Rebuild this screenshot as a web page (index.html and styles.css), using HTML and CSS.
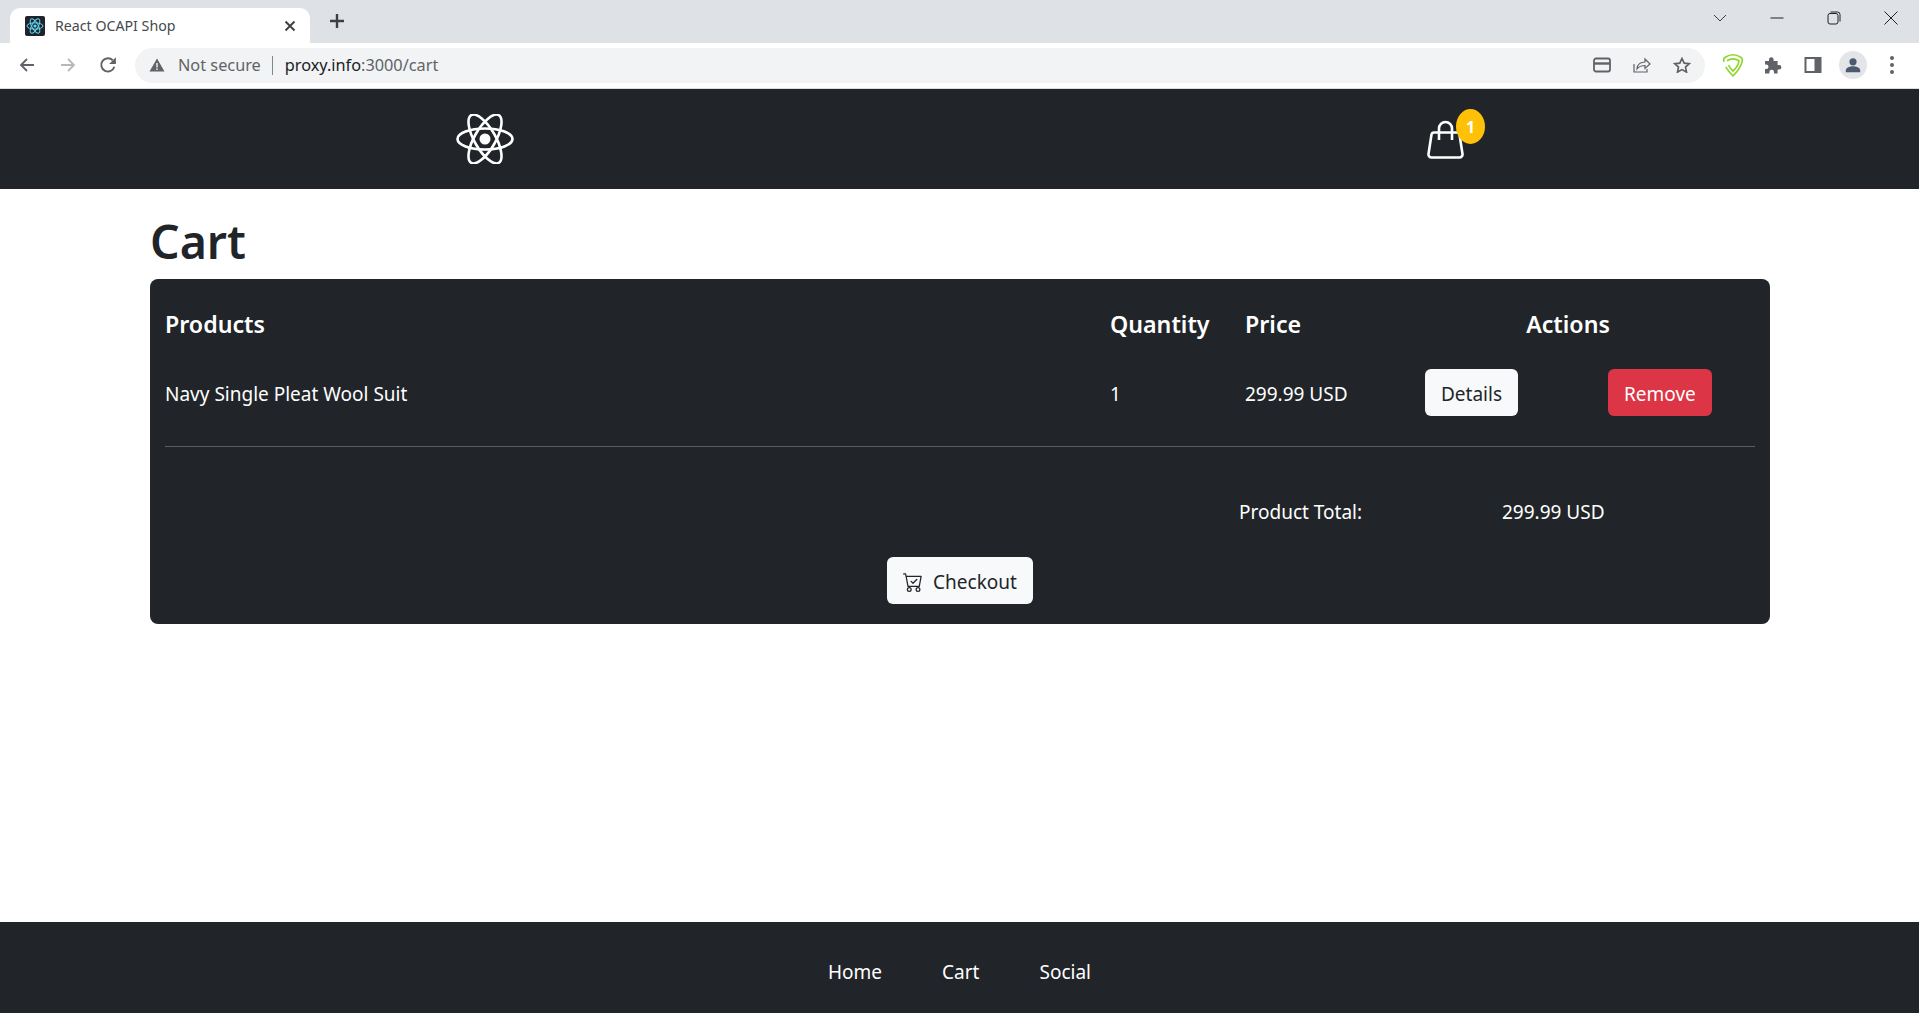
FILE: index.html
```html
<!DOCTYPE html>
<html lang="en">
<head>
    <meta charset="UTF-8">
    <meta name="viewport" content="width=device-width, initial-scale=1.0">
    <title>React OCAPI Shop</title>
    <link rel="stylesheet" href="styles.css">
</head>
<body>
    <!-- browser chrome -->
    <div class="tabstrip">
        <div class="tab">
            <svg class="favicon" viewBox="0 0 20 20">
                <rect width="20" height="20" rx="2" fill="#20232a"/>
                <g fill="none" stroke="#61dafb" stroke-width="1">
                    <ellipse cx="10" cy="10" rx="8" ry="3.2"/>
                    <ellipse cx="10" cy="10" rx="8" ry="3.2" transform="rotate(60 10 10)"/>
                    <ellipse cx="10" cy="10" rx="8" ry="3.2" transform="rotate(120 10 10)"/>
                </g>
                <circle cx="10" cy="10" r="1.6" fill="#61dafb"/>
            </svg>
            <span class="tab-title">React OCAPI Shop</span>
            <svg class="tab-close" viewBox="0 0 12 12"><path d="M1.5 1.5l9 9M10.5 1.5l-9 9" stroke="#3c4043" stroke-width="1.9"/></svg>
        </div>
        <svg class="new-tab" viewBox="0 0 16 16"><path d="M8 1v14M1 8h14" stroke="#3c4043" stroke-width="2.4"/></svg>
        <div class="window-controls">
            <svg class="win-icon" viewBox="0 0 14 14"><path d="M1 4l6 6 6-6" fill="none" stroke="#3c4043"/></svg>
            <svg class="win-icon" viewBox="0 0 14 14"><path d="M0.5 7h13" stroke="#202124"/></svg>
            <svg class="win-icon" viewBox="0 0 14 14"><rect x="1" y="2.5" width="10" height="10.5" rx="2" fill="none" stroke="#202124"/><path d="M3.5 1h7a2.5 2.5 0 0 1 2.5 2.5v7" fill="none" stroke="#202124"/></svg>
            <svg class="win-icon" viewBox="0 0 14 14"><path d="M0.5 0.5l13 13M13.5 0.5l-13 13" stroke="#202124"/></svg>
        </div>
    </div>
    <div class="toolbar">
        <svg class="tool-icon back" viewBox="0 0 16 16"><path d="M15 8H2M8 2L2 8l6 6" fill="none" stroke="#5f6368" stroke-width="1.8"/></svg>
        <svg class="tool-icon forward" viewBox="0 0 16 16"><path d="M1 8h13M8 2l6 6-6 6" fill="none" stroke="#b6b8bb" stroke-width="1.8"/></svg>
        <svg class="tool-icon reload" viewBox="0 0 16 16"><path d="M13.6 9.5A5.9 5.9 0 1 1 12.2 3.8" fill="none" stroke="#5f6368" stroke-width="1.7"/><path d="M15 1v6H9z" fill="#5f6368"/></svg>
        <div class="omnibox">
            <svg class="warn-icon" viewBox="0 0 16 16"><path d="M8 1.5L15.5 14.5H.5z" fill="#5f6368"/><path d="M8 6v4.5M8 11.5V13" stroke="#f1f3f4" stroke-width="1.4"/></svg>
            <span class="not-secure">Not secure</span>
            <span class="url-sep"></span>
            <span class="url"><span class="url-host">proxy.info</span>:3000/cart</span>
            <div class="omni-actions">
                <svg class="omni-icon" viewBox="0 0 18 16"><rect x="1" y="1.5" width="16" height="13" rx="2" fill="none" stroke="#5f6368" stroke-width="1.8"/><path d="M1 6.5h16" stroke="#5f6368" stroke-width="2.4"/></svg>
                <svg class="omni-icon" viewBox="0 0 18 16"><path d="M1 7v8h13v-3" fill="none" stroke="#5f6368" stroke-width="1.2"/><path d="M4 12c0-5 4-7 8-7V2l5 5-5 4.5V8.5c-3 0-6 1-8 3.5z" fill="none" stroke="#5f6368" stroke-width="1.2"/></svg>
                <svg class="omni-icon" viewBox="0 0 18 16"><path d="M9 1.500l2.200 4.600 5 .6-3.700 3.400 1 5L9 12.600 4.500 15.100l1-5L1.800 6.700l5-.6z" fill="none" stroke="#5f6368" stroke-width="1.7"/></svg>
            </div>
        </div>
        <div class="ext-icons">
            <svg class="ext-icon shield-icon" viewBox="0 0 20 20"><path d="M2.500 7.500C1.800 5.500 2 4.500 3.500 3.500 7.500 1 12.500 1 16.500 3.500 18 4.500 18.200 5.500 17.500 7.500 16.300 11.500 13.800 15.500 10 19 7.500 16.800 5.500 14.200 4 11.500" fill="none" stroke="#8fd62f" stroke-width="1.4"/><path d="M5 6.500C8 4.500 12 4.500 15 6.500 14.500 9.500 12.800 12.500 10 15 8.300 13.500 7 11.500 6.300 10" fill="none" stroke="#8fd62f" stroke-width="1.4"/></svg>
            <svg class="ext-icon" viewBox="0 0 20 20"><path d="M2 6h4V4.500a2.300 2.300 0 0 1 4.600 0V6h4v4h1.500a2.300 2.300 0 0 1 0 4.600H14.600V18.500H11v-1.500a2.300 2.300 0 0 0-4.600 0v1.500H2V14h1.200a2.300 2.300 0 0 0 0-4.600H2z" fill="#5f6368"/></svg>
            <svg class="ext-icon panel-icon" viewBox="0 0 20 20"><path d="M1.500 2h17v16h-17zM3.500 4v12h8V4z" fill="#5f6368" fill-rule="evenodd"/></svg>
            <div class="avatar">
                <svg viewBox="0 0 20 20"><circle cx="10" cy="6.500" r="4" fill="#4c5a70"/><path d="M2 18v-2c0-3 5-4.500 8-4.500s8 1.500 8 4.500v2z" fill="#4c5a70"/></svg>
            </div>
            <div class="dots"><span></span><span></span><span></span></div>
        </div>
    </div>

    <!-- page -->
    <nav class="navbar">
        <svg class="logo" viewBox="0 0 58 50">
            <g fill="none" stroke="#fff" stroke-width="2.6">
                <ellipse cx="29" cy="25" rx="27.5" ry="10.5"/>
                <ellipse cx="29" cy="25" rx="27.5" ry="10.5" transform="rotate(60 29 25)"/>
                <ellipse cx="29" cy="25" rx="27.5" ry="10.5" transform="rotate(120 29 25)"/>
            </g>
            <circle cx="29" cy="25" r="5.5" fill="#fff"/>
        </svg>
        <div class="bag">
            <svg class="bag-icon" viewBox="0 0 37 39">
                <path d="M7 12.500h23a2.500 2.500 0 0 1 2.500 2l3 19.500a3 3 0 0 1-3 3.500h-28a3 3 0 0 1-3-3.500l3-19.500a2.500 2.500 0 0 1 2.500-2z" fill="none" stroke="#fff" stroke-width="2.6"/>
                <path d="M12 20V8.500a6.500 6.500 0 0 1 13 0V20" fill="none" stroke="#fff" stroke-width="2.6"/>
            </svg>
            <span class="badge">1</span>
        </div>
    </nav>

    <main class="content">
        <h1>Cart</h1>
        <div class="cart-card">
            <div class="cart-grid cart-head">
                <div>Products</div>
                <div>Quantity</div>
                <div>Price</div>
                <div class="actions-title">Actions</div>
            </div>
            <div class="cart-grid cart-row">
                <div class="cell-text">Navy Single Pleat Wool Suit</div>
                <div class="cell-text">1</div>
                <div class="cell-text">299.99 USD</div>
                <div class="row-actions">
                    <button class="btn btn-light" type="button">Details</button>
                    <button class="btn btn-danger" type="button">Remove</button>
                </div>
            </div>
            <hr class="divider">
            <div class="total-row">
                <span class="total-label">Product Total:</span>
                <span>299.99 USD</span>
            </div>
            <div class="checkout-row">
                <button class="btn btn-light btn-checkout" type="button">
                    <svg class="cart-icon" viewBox="0 0 16 16" fill="#212529">
                        <path d="M11.354 6.354a.5.5 0 0 0-.708-.708L8 8.293 6.854 7.146a.5.5 0 1 0-.708.708l1.5 1.5a.5.5 0 0 0 .708 0l3-3z"/>
                        <path d="M.5 1a.5.5 0 0 0 0 1h1.11l.401 1.607 1.498 7.985A.5.5 0 0 0 4 12h1a2 2 0 1 0 0 4 2 2 0 0 0 0-4h7a2 2 0 1 0 0 4 2 2 0 0 0 0-4h1a.5.5 0 0 0 .491-.408l1.5-8A.5.5 0 0 0 14.5 3H2.89l-.405-1.621A.5.5 0 0 0 2 1H.5zm3.915 10L3.102 4h10.796l-1.313 7h-8.17zM6 14a1 1 0 1 1-2 0 1 1 0 0 1 2 0zm7 0a1 1 0 1 1-2 0 1 1 0 0 1 2 0z"/>
                    </svg>
                    Checkout
                </button>
            </div>
        </div>
    </main>

    <footer class="footer">
        <a href="#">Home</a>
        <a href="#">Cart</a>
        <a href="#">Social</a>
    </footer>
</body>
</html>
```

FILE: styles.css
```css
* {
    box-sizing: border-box;
}
body {
    margin: 0;
    height: 1013px;
    overflow: hidden;
    display: flex;
    flex-direction: column;
    font-family: "Noto Sans", "Open Sans", sans-serif;
    font-size: 19px;
    color: #212529;
    background-color: #fff;
}

/* browser chrome */
.tabstrip {
    height: 43px;
    flex: none;
    display: flex;
    align-items: flex-end;
    background-color: #dee1e6;
}
.tab {
    width: 300px;
    height: 35px;
    margin-left: 10px;
    padding: 0 14px 0 15px;
    display: flex;
    align-items: center;
    background-color: #fff;
    border-radius: 10px 10px 0 0;
}
.favicon {
    width: 20px;
    height: 20px;
    margin-right: 10px;
}
.tab-title {
    flex: 1;
    font-size: 14.2px;
    color: #45494d;
}
.tab-close {
    width: 12px;
    height: 12px;
}
.new-tab {
    width: 16px;
    height: 16px;
    margin: 0 0 14px 19px;
}
.window-controls {
    margin-left: auto;
    height: 100%;
    padding: 11px 21px 0 0;
    display: flex;
    align-items: flex-start;
    gap: 43px;
}
.win-icon {
    width: 14px;
    height: 14px;
}
.toolbar {
    height: 46px;
    flex: none;
    padding: 0 0 1px 19px;
    display: flex;
    align-items: center;
    background-color: #fff;
    border-bottom: 1px solid #dadce0;
}
.tool-icon {
    width: 16px;
    height: 16px;
}
.forward {
    margin-left: 25px;
}
.reload {
    width: 18px;
    height: 18px;
    margin-left: 23px;
}
.omnibox {
    width: 1570px;
    height: 35px;
    margin-left: 18px;
    padding: 0 14px 0 14px;
    display: flex;
    align-items: center;
    background-color: #f1f3f4;
    border-radius: 18px;
    font-size: 16.3px;
}
.warn-icon {
    width: 16px;
    height: 16px;
    margin-right: 13px;
}
.not-secure {
    color: #5f6368;
}
.url-sep {
    width: 1px;
    height: 19px;
    margin: 0 12px 0 11px;
    background-color: #80868b;
}
.url {
    color: #5f6368;
}
.url-host {
    color: #202124;
}
.omni-actions {
    margin-left: auto;
    display: flex;
    gap: 22px;
}
.omni-icon {
    width: 18px;
    height: 16px;
}
.ext-icons {
    margin-left: 16px;
    display: flex;
    align-items: center;
}
.ext-icon {
    width: 20px;
    height: 20px;
    margin-right: 20px;
}
.shield-icon {
    width: 24px;
    height: 24px;
    margin-right: 18px;
}
.panel-icon {
    margin-right: 16px;
}
.avatar {
    width: 28px;
    height: 28px;
    padding: 5px;
    background-color: #e3e5e9;
    border-radius: 50%;
}
.avatar svg {
    display: block;
}
.dots {
    margin-left: 23px;
    display: flex;
    flex-direction: column;
    gap: 3px;
}
.dots span {
    width: 4px;
    height: 4px;
    background-color: #5f6368;
    border-radius: 50%;
}

/* navbar */
.navbar {
    height: 100px;
    flex: none;
    padding: 0 434px 0 456px;
    display: flex;
    align-items: center;
    justify-content: space-between;
    background-color: #212529;
}
.logo {
    width: 58px;
    height: 50px;
}
.bag {
    position: relative;
    width: 58px;
    height: 50px;
    margin-bottom: 10px;
    padding-top: 11px;
}
.bag-icon {
    display: block;
    width: 37px;
    height: 39px;
}
.badge {
    position: absolute;
    top: 0;
    left: 29px;
    width: 29px;
    height: 35px;
    display: flex;
    align-items: center;
    justify-content: center;
    background-color: #ffc107;
    border-radius: 50%;
    color: #fff;
    font-size: 16px;
    font-weight: 700;
}

/* cart */
.content {
    flex: 1;
    padding: 0 149px 0 150px;
}
h1 {
    height: 90px;
    margin: 0;
    padding-top: 15px;
    font-size: 46.5px;
    font-weight: 600;
    line-height: 74px;
}
.cart-card {
    height: 345px;
    padding: 0 15px;
    background-color: #212529;
    border-radius: 8px;
    color: #fff;
}
.cart-grid {
    display: grid;
    grid-template-columns: 945px 135px 172px 302px;
    align-items: center;
}
.cart-head {
    height: 90px;
    font-size: 23.2px;
    font-weight: 600;
}
.actions-title {
    text-align: center;
}
.cart-row {
    height: 47px;
}
.cell-text {
    padding-top: 2px;
}
.row-actions {
    padding-left: 8px;
    display: flex;
    gap: 90px;
}
.btn {
    height: 47px;
    padding: 2px 16px 0;
    border: none;
    border-radius: 6px;
    font-family: inherit;
    font-size: 19px;
    cursor: pointer;
}
.btn-light {
    background-color: #f8f9fa;
    color: #212529;
}
.btn-danger {
    background-color: #dc3545;
    color: #fff;
}
.divider {
    height: 1px;
    margin: 30px 0 0;
    border: none;
    background-color: #5a5d61;
}
.total-row {
    height: 44px;
    margin-top: 43px;
    padding-left: 1074px;
    display: flex;
    align-items: center;
}
.total-label {
    width: 263px;
}
.checkout-row {
    margin-top: 23px;
    display: flex;
    justify-content: center;
}
.btn-checkout {
    width: 146px;
    padding: 2px 0 0;
    display: flex;
    align-items: center;
    justify-content: center;
    gap: 10px;
}
.cart-icon {
    width: 20px;
    height: 20px;
}

/* footer */
.footer {
    height: 91px;
    flex: none;
    padding-top: 8px;
    display: flex;
    align-items: center;
    justify-content: center;
    gap: 60px;
    background-color: #212529;
}
.footer a {
    color: #fff;
    text-decoration: none;
}
```
